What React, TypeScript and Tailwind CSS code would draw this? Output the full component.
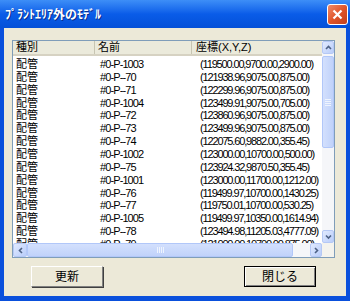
import React from "react";

const ROWS: [string, string][] = [
  ["#0-P-1003", "(119500.00,9700.00,2900.00)"],
  ["#0-P--70", "(121938.96,9075.00,875.00)"],
  ["#0-P--71", "(122299.96,9075.00,875.00)"],
  ["#0-P-1004", "(123499.91,9075.00,705.00)"],
  ["#0-P--72", "(123860.96,9075.00,875.00)"],
  ["#0-P--73", "(123499.96,9075.00,875.00)"],
  ["#0-P--74", "(122075.60,9882.00,355.45)"],
  ["#0-P-1002", "(123000.00,10700.00,500.00)"],
  ["#0-P--75", "(123924.32,9870.50,355.45)"],
  ["#0-P-1001", "(123000.00,11700.00,1212.00)"],
  ["#0-P--76", "(119499.97,10700.00,1430.25)"],
  ["#0-P--77", "(119750.01,10700.00,530.25)"],
  ["#0-P-1005", "(119499.97,10350.00,1614.94)"],
  ["#0-P--78", "(123494.98,11205.03,4777.09)"],
  ["#0-P--79", "(121000.00,10700.00,875.00)"],
];

const FONT = { fontFamily: '"Liberation Sans", "Noto Sans CJK JP", sans-serif' };

function Chevron({ dir }: { dir: "up" | "down" | "left" | "right" }) {
  const pts = {
    up: "2,6 4.5,3.5 7,6",
    down: "2,3.5 4.5,6 7,3.5",
    left: "6,2 3.5,4.5 6,7",
    right: "3,2 5.5,4.5 3,7",
  }[dir];
  return (
    <svg width="9" height="9" viewBox="0 0 9 9">
      <polyline points={pts} fill="none" stroke="#4D6185" strokeWidth="1.6" />
    </svg>
  );
}

function ArrowBtn({ dir, className }: { dir: "up" | "down" | "left" | "right"; className: string }) {
  return (
    <div
      className={`flex items-center justify-center rounded-[2px] border border-[#B5C8F5] bg-gradient-to-br from-[#E1EAFE] to-[#B9CDFA] ${className}`}
    >
      <Chevron dir={dir} />
    </div>
  );
}

export default function App() {
  return (
    <div className="flex h-[301px] w-[350px] flex-col bg-[#0A50DC]" style={FONT}>
      {/* title bar */}
      <div className="flex h-[28px] items-center justify-between bg-gradient-to-b from-[#3D8EF7] via-[#0A5CE8] to-[#0450D8] pl-[5px] pr-[2px]">
        <span
          className="text-[12px] font-bold text-white"
          style={{ fontFamily: '"Noto Sans CJK JP", sans-serif', textShadow: "1px 1px 0 #0A2E8C" }}
        >
          ﾌﾟﾗﾝﾄｴﾘｱ外のﾓﾃﾞﾙ
        </span>
        <div className="flex h-[21px] w-[21px] items-center justify-center rounded-[3px] border border-white bg-gradient-to-br from-[#F08A68] via-[#E0552A] to-[#C2401C]">
          <svg width="11" height="11" viewBox="0 0 11 11">
            <path d="M1.5 1.5 L9.5 9.5 M9.5 1.5 L1.5 9.5" stroke="white" strokeWidth="2.2" />
          </svg>
        </div>
      </div>

      {/* body */}
      <div className="mx-[4px] mb-[5px] flex flex-1 flex-col bg-[#ECE9D8] pl-[8px] pr-[11px] pt-[12px]">
        <div className="flex h-[218px] flex-col border border-[#7F9DB9] bg-white">
          <div className="flex h-[202px]">
            <div className="flex-1 overflow-hidden">
              {/* header */}
              <div className="flex h-[15px] border-b-[2px] border-[#D6D2C2] bg-[#EBEADB] text-[11px] leading-[13px] text-black">
                <div className="w-[82px] border-r border-[#C7C5B2] pl-[3px]">種別</div>
                <div className="w-[97px] border-r border-[#C7C5B2] pl-[3px]">名前</div>
                <div className="flex-1 pl-[4px]">座標(X,Y,Z)</div>
              </div>
              <div className="pt-[2px]">
                {ROWS.map(([name, pos], i) => (
                  <div key={i} className="flex h-[12.86px] text-[11px] leading-[12.86px] text-black">
                    <div className="w-[82px] pl-[3px]">配管</div>
                    <div className="w-[97px] pl-[5px] tracking-[-0.9px]">{name}</div>
                    <div className="flex-1 whitespace-nowrap pl-[8px] tracking-[-1.15px]">{pos}</div>
                  </div>
                ))}
              </div>
            </div>
            {/* vertical scrollbar */}
            <div className="flex w-[12px] flex-col bg-[#F5F6F9]">
              <ArrowBtn dir="up" className="h-[13px]" />
              <div className="flex-1 pt-[2px]">
                <div className="flex h-[92px] items-center justify-center rounded-[2px] border border-[#B1C7F9] bg-gradient-to-r from-[#D3E0FD] to-[#C0D2FA]">
                  <div className="flex flex-col gap-[1px]">
                    <div className="h-[1px] w-[6px] bg-[#EEF4FE]" />
                    <div className="h-[1px] w-[6px] bg-[#EEF4FE]" />
                    <div className="h-[1px] w-[6px] bg-[#EEF4FE]" />
                    <div className="h-[1px] w-[6px] bg-[#EEF4FE]" />
                  </div>
                </div>
              </div>
              <ArrowBtn dir="down" className="h-[13px]" />
            </div>
          </div>
          {/* horizontal scrollbar */}
          <div className="flex h-[14px]">
            <div className="flex flex-1 bg-[#F5F6F9]">
              <ArrowBtn dir="left" className="w-[14px]" />
              <div className="flex w-[266px] items-center justify-center rounded-[2px] border border-[#B1C7F9] bg-gradient-to-b from-[#D3E0FD] to-[#C0D2FA]">
                <div className="flex gap-[1px]">
                  <div className="h-[6px] w-[1px] bg-[#EEF4FE]" />
                  <div className="h-[6px] w-[1px] bg-[#EEF4FE]" />
                  <div className="h-[6px] w-[1px] bg-[#EEF4FE]" />
                  <div className="h-[6px] w-[1px] bg-[#EEF4FE]" />
                </div>
              </div>
              <div className="flex-1" />
              <ArrowBtn dir="right" className="w-[12px]" />
            </div>
            <div className="w-[12px] bg-[#F4F3EE]" />
          </div>
        </div>

        {/* buttons */}
        <div className="mt-[8px] flex justify-between px-[19px]">
          <button className="flex h-[21px] w-[72px] items-center justify-center border border-b-[#808080] border-l-white border-r-[#808080] border-t-white bg-[#ECE9D8] text-[12px] text-black shadow-[1px_1px_0_#404040]">
            更新
          </button>
          <button className="flex h-[21px] w-[72px] items-center justify-center border border-black bg-[#ECE9D8] text-[12px] text-black shadow-[inset_1px_1px_0_white,inset_-1px_-1px_0_#808080]">
            閉じる
          </button>
        </div>
      </div>
    </div>
  );
}
